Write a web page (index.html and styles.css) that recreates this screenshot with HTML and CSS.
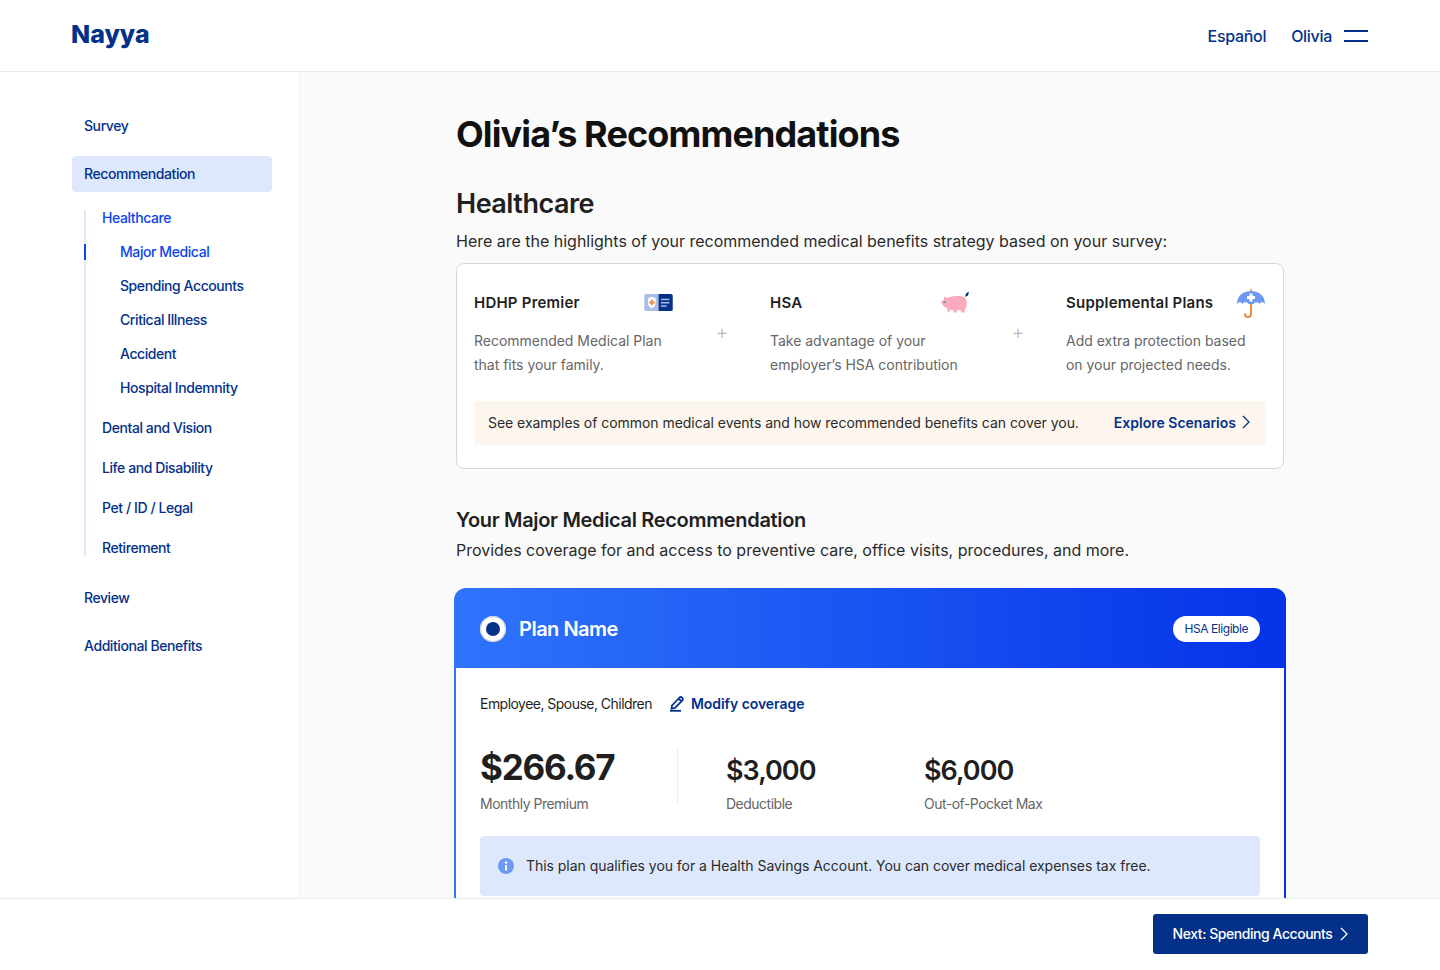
FILE: index.html
```html
<!DOCTYPE html>
<html lang="en">
<head>
  <meta charset="UTF-8">
  <meta name="viewport" content="width=device-width, initial-scale=1.0"/>
  <title>Nayya - Recommendations</title>
  <link rel="stylesheet" href="styles.css">
</head>
<body>
  <div class="app">
    <header class="topbar">
      <div class="logo">Nayya</div>
      <nav class="topnav">
        <a class="toplink lang">Español</a>
        <a class="toplink">Olivia</a>
        <span class="burger"><i></i><i></i></span>
      </nav>
    </header>

    <div class="layout">
      <aside class="sidebar">
        <a class="step">Survey</a>
        <a class="step current">Recommendation</a>
        <div class="subnav">
          <a class="sub active">Healthcare</a>
          <div class="subsub">
            <a class="leaf active marked">Major Medical</a>
            <a class="leaf">Spending Accounts</a>
            <a class="leaf">Critical Illness</a>
            <a class="leaf">Accident</a>
            <a class="leaf">Hospital Indemnity</a>
          </div>
          <a class="sub">Dental and Vision</a>
          <a class="sub">Life and Disability</a>
          <a class="sub">Pet / ID / Legal</a>
          <a class="sub">Retirement</a>
        </div>
        <a class="step review">Review</a>
        <a class="step">Additional Benefits</a>
      </aside>

      <main class="content">
        <h1>Olivia’s Recommendations</h1>
        <h2>Healthcare</h2>
        <p class="lead">Here are the highlights of your recommended medical benefits strategy based on your survey:</p>

        <section class="card">
          <div class="highlights">
            <div class="highlight">
              <div class="highlight-head">
                <strong>HDHP Premier</strong>
                <svg class="ico-card" width="29" height="19" viewBox="0 0 30 20">
                  <path d="M2 1h13v18H2a2 2 0 0 1-2-2V3a2 2 0 0 1 2-2z" fill="#a9bde8"/>
                  <path d="M15 1h13a2 2 0 0 1 2 2v14a2 2 0 0 1-2 2H15z" fill="#03318a"/>
                  <path d="M4 5.500l4-1.500 4 1.500v5c0 3-2 4.500-4 5.500-2-1-4-2.500-4-5.500z" fill="#fff"/>
                  <path d="M7 7h2v2h2v2H9v2H7v-2H5V9h2z" fill="#f08a3c"/>
                  <path d="M17.500 6h9v1.500h-9zM17.500 9.500h9V11h-9zM17.500 13h6v1.500h-6z" fill="#a9bde8"/>
                </svg>
              </div>
              <p>Recommended Medical Plan<br>that fits your family.</p>
            </div>
            <span class="plus">+</span>
            <div class="highlight">
              <div class="highlight-head">
                <strong>HSA</strong>
                <svg class="ico-pig" width="30" height="22" viewBox="0 0 30 22">
                  <path d="M1 10.500L4 9V5.500L7.500 7C10 5.500 14 5 18 5c4 0 8 1 8.500 5 .5 3 0 6-1.500 8l-.5 3.500h-3l-1-2.500h-3l-1 2.500h-3l-.5-2.500h-3l-1 2.500H8l-1-4.500C4 16 2 14 1 10.500z" fill="#fba9bd"/>
                  <circle cx="4.500" cy="11" r="1" fill="#5f8f8f"/>
                  <path d="M25 6l3-1.500 1-4-3 2z" fill="#03318a"/>
                </svg>
              </div>
              <p>Take advantage of your<br>employer’s HSA contribution</p>
            </div>
            <span class="plus">+</span>
            <div class="highlight">
              <div class="highlight-head">
                <strong>Supplemental Plans</strong>
                <svg class="ico-umbrella" width="30" height="30" viewBox="0 0 30 30">
                  <path d="M15 1v5" stroke="#f08a3c" stroke-width="1.500" fill="none"/>
                  <path d="M15 15v11a3 3 0 0 1-6 0" stroke="#f08a3c" stroke-width="2" fill="none" stroke-linecap="round"/>
                  <path d="M1 16C1 8 7 3 15 3s14 5 14 13c-2-2.500-4.500-2.500-5.500 0-1.500-2.500-5-2.500-6 0h-5c-1-2.500-4.500-2.500-6 0-1-2.500-3.500-2.500-5.500 0z" fill="#6d9bf4"/>
                  <path d="M13.500 5.500h3v2.500H19v3h-2.500v2.500h-3V11H11V8h2.500z" fill="#fff"/>
                </svg>
              </div>
              <p>Add extra protection based<br>on your projected needs.</p>
            </div>
          </div>
          <div class="scenario">
            <span>See examples of common medical events and how recommended benefits can cover you.</span>
            <a class="explore">Explore Scenarios
              <svg width="8" height="14" viewBox="0 0 8 14"><path d="M1 1l6 6-6 6" fill="none" stroke="currentColor" stroke-width="1.300"/></svg>
            </a>
          </div>
        </section>

        <h3>Your Major Medical Recommendation</h3>
        <p class="lead sub-lead">Provides coverage for and access to preventive care, office visits, procedures, and more.</p>

        <section class="plan">
          <div class="plan-head">
            <span class="radio"></span>
            <span class="plan-name">Plan Name</span>
            <span class="pill">HSA Eligible</span>
          </div>
          <div class="plan-body">
            <div class="coverage">
              <span>Employee, Spouse, Children</span>
              <a class="modify">
                <svg width="16" height="18" viewBox="0 0 16 18"><path d="M3 11.500L10.500 3.500a1.600 1.600 0 0 1 2.300 0l.6.6a1.600 1.600 0 0 1 0 2.300L6 14l-3.500.6zM9.500 4.500l3 3" fill="none" stroke="currentColor" stroke-width="1.800"/><path d="M1 16.800h11" stroke="currentColor" stroke-width="1.800"/></svg>
                Modify coverage
              </a>
            </div>
            <div class="costs">
              <div class="cost premium">
                <div class="amount big">$266.67</div>
                <div class="cost-label">Monthly Premium</div>
              </div>
              <div class="cost deductible">
                <div class="amount">$3,000</div>
                <div class="cost-label">Deductible</div>
              </div>
              <div class="cost">
                <div class="amount">$6,000</div>
                <div class="cost-label">Out-of-Pocket Max</div>
              </div>
            </div>
            <div class="notice">
              <svg width="16" height="16" viewBox="0 0 16 16"><circle cx="8" cy="8" r="8" fill="#6d9bf4"/><path d="M7 7h2v5.500H7z" fill="#fff"/><circle cx="8" cy="4.500" r="1.200" fill="#fff"/></svg>
              <span>This plan qualifies you for a Health Savings Account. You can cover medical expenses tax free.</span>
            </div>
          </div>
        </section>
      </main>
    </div>

    <footer class="bottombar">
      <button class="next">Next: Spending Accounts
        <svg width="8" height="14" viewBox="0 0 8 14"><path d="M1 1l6 6-6 6" fill="none" stroke="currentColor" stroke-width="1.300"/></svg>
      </button>
    </footer>
  </div>
</body>
</html>
```

FILE: styles.css
```css
:root {
  --navy: #03318a;
  --blue: #0b45f0;
  --light-blue: #dde8fd;
  --text-dark: #1f1f1f;
  --text-gray: #666;
  --line: #ececec;
}

* {
  box-sizing: border-box;
}

html, body {
  height: 100%;
}

body {
  margin: 0;
  font-family: Inter, "Liberation Sans", sans-serif;
  color: var(--text-dark);
  background: #fff;
}

.app {
  height: 970px;
  display: flex;
  flex-direction: column;
  overflow: hidden;
}

.topbar {
  height: 72px;
  flex: none;
  display: flex;
  align-items: center;
  justify-content: space-between;
  padding: 0 72px 0 71px;
  border-bottom: 1px solid var(--line);
}

.logo {
  font-size: 25px;
  font-weight: 800;
  color: var(--navy);
  margin-top: -3px;
}

.topnav {
  display: flex;
  align-items: center;
}

.toplink {
  font-size: 16px;
  font-weight: 500;
  color: var(--navy);
  letter-spacing: -0.3px;
}

.lang {
  margin-right: 25px;
}

.burger {
  width: 24px;
  margin-left: 12px;
  display: flex;
  flex-direction: column;
  gap: 8px;
}

.burger i {
  display: block;
  height: 2px;
  background: var(--navy);
}

.layout {
  flex: 1;
  display: flex;
  min-height: 0;
}

.sidebar {
  width: 300px;
  flex: none;
  padding: 36px 27px 0 72px;
  border-right: 1px solid #f2f2f2;
  display: flex;
  flex-direction: column;
}

.sidebar a {
  display: block;
  font-size: 14px;
  font-weight: 500;
  letter-spacing: -0.42px;
  line-height: 20px;
  color: var(--navy);
}

.sidebar .step {
  padding: 8px 12px;
  margin-bottom: 12px;
  height: 36px;
}

.sidebar .current {
  background: var(--light-blue);
  border-radius: 4px;
  margin-bottom: 18px;
}

.sidebar .review {
  margin-top: 24px;
}

.subnav {
  margin-left: 12px;
  padding-left: 16px;
  border-left: 2px solid var(--light-blue);
}

.sidebar .sub {
  padding: 0;
  height: 20px;
  margin-bottom: 20px;
}

.sidebar .sub:first-child {
  margin-top: -2px;
}

.sidebar .sub:last-child {
  margin-bottom: 0;
  height: 18px;
}

.subsub {
  margin: -6px 0 20px 18px;
  display: flex;
  flex-direction: column;
  gap: 14px;
}

.sidebar .active {
  color: var(--blue);
}

.marked {
  position: relative;
}

.marked::before {
  content: "";
  position: absolute;
  left: -36px;
  top: 2px;
  width: 2px;
  height: 16px;
  background: var(--blue);
}

.content {
  flex: 1;
  background: #fafafa;
  padding: 39px 156px 0 156px;
  overflow: hidden;
}

h1 {
  margin: 0;
  font-size: 36px;
  line-height: 46px;
  font-weight: 700;
  letter-spacing: -0.88px;
  color: #111;
}

h2 {
  margin: 30px 0 0;
  font-size: 27px;
  line-height: 34px;
  font-weight: 600;
  letter-spacing: -0.5px;
}

h3 {
  margin: 37px 0 0;
  font-size: 20px;
  line-height: 28px;
  font-weight: 600;
  letter-spacing: -0.33px;
}

.lead {
  margin: 8px 0 0;
  font-size: 16px;
  line-height: 24px;
  letter-spacing: -0.01px;
  color: #2b2b2b;
}

.sub-lead {
  margin-top: 4px;
}

.card {
  margin-top: 10px;
  height: 206px;
  background: #fff;
  border: 1px solid #d8d8d8;
  border-radius: 8px;
  padding: 17px;
}

.highlights {
  display: flex;
  height: 120px;
}

.highlight {
  width: 200px;
  flex: none;
}

.highlight-head {
  height: 42px;
  display: flex;
  align-items: center;
  justify-content: space-between;
  font-size: 15px;
  letter-spacing: 0.22px;
}

.highlight-head strong {
  font-weight: 600;
}

.highlight p {
  margin: 6px 0 0;
  font-size: 14px;
  line-height: 24px;
  letter-spacing: -0.02px;
  color: var(--text-gray);
}

.ico-card {
  margin-right: 1px;
}

.ico-umbrella {
  margin-top: 2px;
}

.plus {
  width: 96px;
  text-align: center;
  color: #bbb;
  font-size: 20px;
  font-weight: 300;
  line-height: 24px;
  margin-top: 39px;
}

.scenario {
  height: 44px;
  background: #fdf6ee;
  border-radius: 4px;
  display: flex;
  align-items: center;
  justify-content: space-between;
  padding: 0 16px 2px 14px;
  font-size: 14px;
  letter-spacing: -0.04px;
  color: #2b2b2b;
}

.explore {
  display: flex;
  align-items: center;
  gap: 6px;
  color: var(--navy);
  font-weight: 600;
  letter-spacing: 0;
}

.plan {
  margin: 26px -2px 0;
  border-radius: 12px 12px 0 0;
}

.plan-head {
  height: 80px;
  border-radius: 12px 12px 0 0;
  background: linear-gradient(90deg, #2f74fb 0%, #0433e8 100%);
  display: flex;
  align-items: center;
  padding: 2px 26px 0;
  color: #fff;
}

.radio {
  width: 26px;
  height: 26px;
  border-radius: 50%;
  background: var(--navy);
  border: 6px solid #fff;
  outline: 1px solid #ccc;
  outline-offset: -1px;
}

.plan-name {
  margin-left: 13px;
  font-size: 20px;
  font-weight: 600;
  flex: 1;
  letter-spacing: -0.5px;
}

.pill {
  background: #fff;
  color: var(--navy);
  border-radius: 13px;
  height: 26px;
  line-height: 26px;
  padding: 0 12px;
  font-size: 12px;
  letter-spacing: -0.45px;
}

.plan-body {
  height: 300px;
  background: #fff;
  border-left: 2px solid #2f74fb;
  border-right: 2px solid #0433e8;
  padding: 0 24px;
}

.coverage {
  height: 72px;
  padding-bottom: 2px;
  display: flex;
  align-items: center;
  font-size: 14px;
  letter-spacing: -0.53px;
}

.modify {
  display: flex;
  align-items: center;
  gap: 6px;
  margin-left: 17px;
  font-weight: 600;
  color: var(--navy);
  letter-spacing: -0.05px;
}

.costs {
  display: flex;
  height: 96px;
}

.cost {
  width: 198px;
}

.premium {
  position: relative;
}

.premium::after {
  content: "";
  position: absolute;
  right: 0;
  top: 8px;
  width: 1px;
  height: 56px;
  background: var(--line);
}

.deductible {
  margin-left: 48px;
}

.amount {
  font-size: 27px;
  font-weight: 600;
  line-height: 36px;
  margin-top: 13px;
  letter-spacing: -1px;
}

.amount.big {
  font-size: 35px;
  line-height: 44px;
  font-weight: 700;
  margin-top: 5px;
  letter-spacing: -1.25px;
}

.cost-label {
  margin-top: 5px;
  font-size: 14px;
  line-height: 20px;
  letter-spacing: -0.5px;
  color: var(--text-gray);
}

.notice {
  height: 60px;
  background: var(--light-blue);
  border-radius: 4px;
  display: flex;
  align-items: center;
  gap: 12px;
  padding: 0 18px 1px;
  font-size: 14px;
  letter-spacing: -0.04px;
  color: #2b2b2b;
}

.bottombar {
  position: absolute;
  left: 0;
  right: 0;
  top: 898px;
  height: 72px;
  background: #fff;
  border-top: 1px solid var(--line);
  display: flex;
  align-items: center;
  justify-content: flex-end;
  padding: 0 72px 2px;
}

.next {
  height: 40px;
  width: 215px;
  background: var(--navy);
  color: #fff;
  border: none;
  border-radius: 3px;
  font-family: inherit;
  font-size: 14px;
  font-weight: 500;
  letter-spacing: -0.45px;
  display: flex;
  align-items: center;
  justify-content: center;
  gap: 8px;
}
```
